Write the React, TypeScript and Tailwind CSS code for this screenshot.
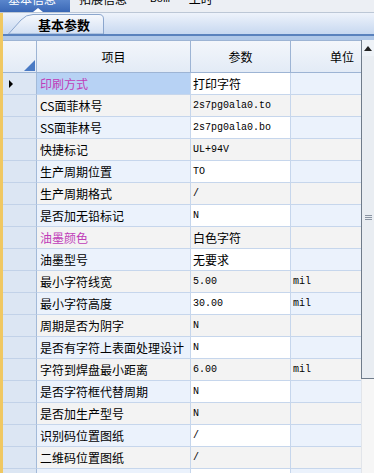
import React from 'react';

type Row = { item: string; value: string; unit: string; hot?: boolean };

const rows: Row[] = [
  { item: '印刷方式', value: '打印字符', unit: '', hot: true },
  { item: 'CS面菲林号', value: '2s7pg0ala0.to', unit: '' },
  { item: 'SS面菲林号', value: '2s7pg0ala0.bo', unit: '' },
  { item: '快捷标记', value: 'UL+94V', unit: '' },
  { item: '生产周期位置', value: 'TO', unit: '' },
  { item: '生产周期格式', value: '/', unit: '' },
  { item: '是否加无铅标记', value: 'N', unit: '' },
  { item: '油墨颜色', value: '白色字符', unit: '', hot: true },
  { item: '油墨型号', value: '无要求', unit: '' },
  { item: '最小字符线宽', value: '5.00', unit: 'mil' },
  { item: '最小字符高度', value: '30.00', unit: 'mil' },
  { item: '周期是否为阴字', value: 'N', unit: '' },
  { item: '是否有字符上表面处理设计', value: 'N', unit: '' },
  { item: '字符到焊盘最小距离', value: '6.00', unit: 'mil' },
  { item: '是否字符框代替周期', value: 'N', unit: '' },
  { item: '是否加生产型号', value: 'N', unit: '' },
  { item: '识别码位置图纸', value: '/', unit: '' },
  { item: '二维码位置图纸', value: '/', unit: '' },
  { item: '', value: '', unit: '' },
];

const cjk = "font-['Noto_Sans_CJK_SC',sans-serif]";
const mono = "font-['Liberation_Mono','Noto_Sans_CJK_SC',monospace]";

function Value({ text }: { text: string }) {
  if (/^[\x00-\x7f]*$/.test(text)) {
    return <span className={`${mono} text-[10px] leading-none`}>{text}</span>;
  }
  return <span className={`${cjk} text-[12px] leading-none`}>{text}</span>;
}

export default function App() {
  return (
    <div className={`w-[374px] h-[473px] overflow-hidden bg-white flex flex-col text-black ${cjk}`}>
      {/* top tab strip, scrolled up */}
      <div className="h-[13px] shrink-0 flex items-start bg-[#eceff4] border-b border-[#bcc7d6] overflow-hidden text-[12px]">
        <div className="relative w-[70px] h-full bg-gradient-to-b from-[#5a86cc] to-[#3a68b6] text-white">
          <span className="block pl-[8px] -mt-[8px] leading-[14px]">基本信息</span>
          <span className="absolute left-[33px] bottom-0 w-0 h-0 border-x-[5px] border-x-transparent border-b-[4px] border-b-white" />
        </div>
        <span className="ml-[9px] -mt-[8px] leading-[14px]">拓展信息</span>
        <span className={`ml-[23px] -mt-[8px] leading-[14px] ${mono} text-[11px]`}>Bom</span>
        <span className="ml-[19px] -mt-[8px] leading-[14px]">工时</span>
      </div>

      <div className="flex flex-1 min-h-0">
        <div className="w-[3px] shrink-0 bg-[#f0c862]" />
        <div className="flex-1 min-w-0 flex flex-col">
          {/* sub tab bar */}
          <div className="h-[21px] shrink-0 flex items-end bg-gradient-to-b from-[#eef3fb] to-[#c7d8f0]">
            <div className="relative ml-[5px] w-[96px] h-[20px]">
              <svg className="absolute inset-0" width="96" height="20" viewBox="0 0 96 20">
                <defs>
                  <linearGradient id="tabg" x1="0" y1="0" x2="0" y2="1">
                    <stop offset="0" stopColor="#f7f9fd" />
                    <stop offset="1" stopColor="#d3e0f3" />
                  </linearGradient>
                </defs>
                <path d="M0.5 20 L13 6 Q18 0.5 25 0.5 L91 0.5 Q95.5 0.5 95.5 5 L95.5 20 Z" fill="url(#tabg)" stroke="#8ba6cd" />
              </svg>
              <span className="relative block pl-[30px] pt-[3px] text-[13px] font-bold leading-[15px]">基本参数</span>
            </div>
          </div>
          <div className="h-[2px] shrink-0 bg-[#5a82bd]" />
          <div className="h-[4px] shrink-0 bg-[#b0c8e8]" />

          <div className="flex flex-1 min-h-0">
            {/* grid */}
            <div className="flex-1 min-w-0 overflow-hidden">
              <div className="w-[390px]">
                <div className="flex h-[33px] border-y border-[#9db4d4] bg-gradient-to-b from-[#f3f6fb] to-[#e3ebf6] text-[12px]">
                  <div className="relative w-[34px] shrink-0 border-r border-[#9db4d4]">
                    <span className="absolute right-[1px] bottom-[1px] w-0 h-0 border-l-[11px] border-l-transparent border-b-[11px] border-b-[#4a7ac4]" />
                  </div>
                  <div className="w-[154px] shrink-0 border-r border-[#9db4d4] flex items-center justify-center">项目</div>
                  <div className="w-[100px] shrink-0 border-r border-[#9db4d4] flex items-center justify-center">参数</div>
                  <div className="w-[102px] shrink-0 flex items-center justify-center">单位</div>
                </div>
                {rows.map((r, i) => {
                  const odd = i % 2 === 1;
                  const base = odd ? 'bg-[#f3f3f3]' : 'bg-[#ebf2fc]';
                  const itemBg = i === 0 ? 'bg-[#b7d2f4]' : base;
                  const valBg = odd ? 'bg-[#f3f3f3]' : 'bg-white';
                  return (
                    <div key={i} className="flex h-[22px]">
                      <div className="w-[34px] shrink-0 bg-[#dce6f3] border-r border-b border-r-[#a3bad8] border-b-[#c2d2e8] flex items-center">
                        {i === 0 && (
                          <span className="ml-[6px] w-0 h-0 border-y-[4px] border-y-transparent border-l-[4px] border-l-black" />
                        )}
                      </div>
                      <div className={`w-[154px] shrink-0 ${itemBg} border-r border-b border-[#c6d6ec] flex items-center pl-[3px] text-[12px] ${r.hot ? 'text-[#c03cb8]' : ''}`}>
                        {r.item}
                      </div>
                      <div className={`w-[100px] shrink-0 ${valBg} border-r border-b border-[#c6d6ec] flex items-center pl-[2px]`}>
                        <Value text={r.value} />
                      </div>
                      <div className={`w-[102px] shrink-0 ${base} border-b border-[#c6d6ec] flex items-center pl-[2px]`}>
                        <span className={`${mono} text-[10px] leading-none`}>{r.unit}</span>
                      </div>
                    </div>
                  );
                })}
              </div>
            </div>

            {/* scrollbar */}
            <div className="w-[13px] shrink-0 flex flex-col bg-[#f6f6f6]">
              <div className="h-[16px] shrink-0 bg-[#eef2f7] border-l border-[#6f7b8a] flex items-center justify-center">
                <span className="w-0 h-0 border-x-[4px] border-x-transparent border-b-[5px] border-b-[#222]" />
              </div>
              <div className="h-[323px] shrink-0 bg-[#e9edf2] border-l border-b border-[#6f7b8a] flex flex-col items-center justify-center gap-[1px]">
                <span className="w-[7px] h-px bg-[#8a94a2]" />
                <span className="w-[7px] h-px bg-[#8a94a2]" />
                <span className="w-[7px] h-px bg-[#8a94a2]" />
              </div>
              <div className="flex-1 border-l border-[#e2e5ea]" />
            </div>
          </div>
        </div>
      </div>
    </div>
  );
}
